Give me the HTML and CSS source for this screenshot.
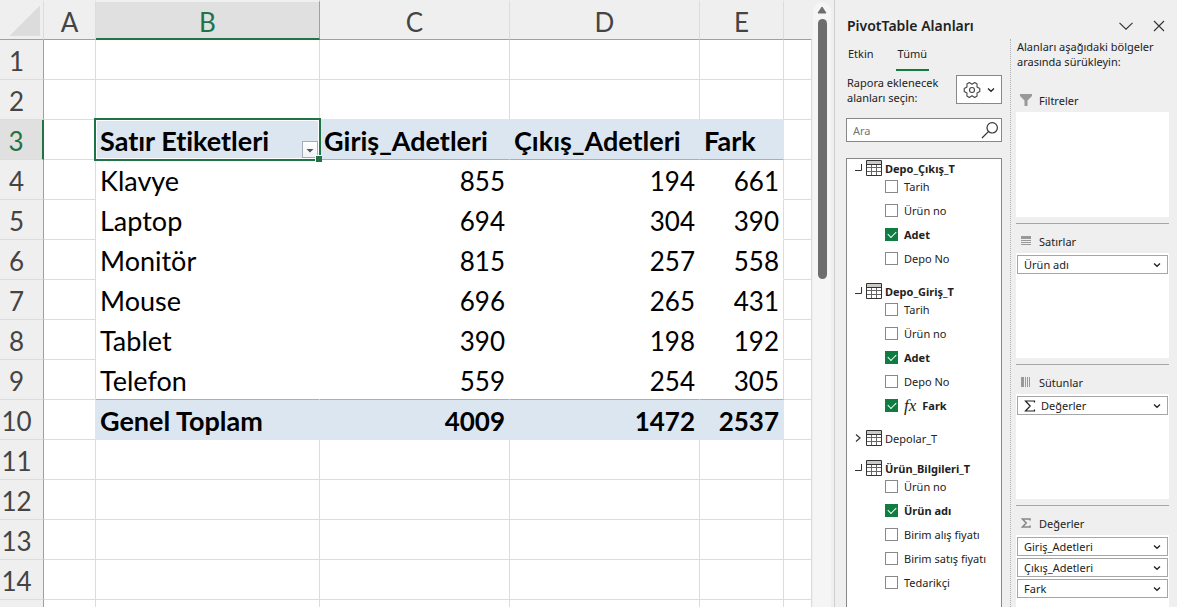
FILE: index.html
```html
<!DOCTYPE html>
<html lang="tr">
<head>
    <meta charset="UTF-8">
    <meta name="viewport" content="width=device-width, initial-scale=1.0">
    <title>PivotTable Alanları</title>
    <link rel="stylesheet" href="styles.css">
</head>
<body>

<!-- Shared icons -->
<svg class="icon-defs" aria-hidden="true">
    <symbol id="chevron" viewBox="0 0 8 8"><path d="M1 2.5 4 5.3 7 2.5" fill="none" stroke="#222" stroke-width="1.3"/></symbol>
    <symbol id="table" viewBox="0 0 16 16">
        <path d="M.5.5h15v15H.5z" fill="#fff"/>
        <path d="M1 1h14v3H1z" fill="#c8cbc5"/>
        <path d="M1 7.5h14M1 11.5h14M5.5 4v11M10.5 4v11" stroke="#666" fill="none"/>
        <path d="M.5.5h15v15H.5zM1 4.5h14" fill="none" stroke="#333"/>
    </symbol>
    <symbol id="open" viewBox="0 0 8 8"><path d="M6.5 0v6.5H0" fill="none" stroke="#333"/></symbol>
    <symbol id="closed" viewBox="0 0 8 8"><path d="M1 .5 5 4 1 7.5" fill="none" stroke="#333" stroke-width="1.2"/></symbol>
    <symbol id="sigma" viewBox="0 0 12 12"><path d="M10.5 2.5V1H1.5l4.7 5-4.7 5h9V9.5" fill="none" stroke="currentColor" stroke-width="1.2"/></symbol>
</svg>

<div class="app">
    <!-- Worksheet -->
    <main class="sheet">
        <table class="grid">
            <colgroup>
                <col class="col-head"><col class="col-a"><col class="col-b"><col class="col-c"><col class="col-d"><col class="col-e"><col>
            </colgroup>
            <thead>
                <tr><th class="corner"></th><th>A</th><th class="active">B</th><th>C</th><th>D</th><th>E</th><th></th></tr>
            </thead>
            <tbody>
                <tr><th>1</th><td></td><td></td><td></td><td></td><td></td><td></td></tr>
                <tr class="above"><th>2</th><td></td><td></td><td></td><td></td><td></td><td></td></tr>
                <tr class="pivot pivot-head">
                    <th class="active">3</th><td></td>
                    <td class="selected">Satır Etiketleri<button class="filter" aria-label="Filtrele"></button></td>
                    <td>Giriş_Adetleri</td><td>Çıkış_Adetleri</td><td>Fark</td><td></td>
                </tr>
                <tr class="pivot"><th>4</th><td></td><td>Klavye</td><td class="num">855</td><td class="num">194</td><td class="num">661</td><td></td></tr>
                <tr class="pivot"><th>5</th><td></td><td>Laptop</td><td class="num">694</td><td class="num">304</td><td class="num">390</td><td></td></tr>
                <tr class="pivot"><th>6</th><td></td><td>Monitör</td><td class="num">815</td><td class="num">257</td><td class="num">558</td><td></td></tr>
                <tr class="pivot"><th>7</th><td></td><td>Mouse</td><td class="num">696</td><td class="num">265</td><td class="num">431</td><td></td></tr>
                <tr class="pivot"><th>8</th><td></td><td>Tablet</td><td class="num">390</td><td class="num">198</td><td class="num">192</td><td></td></tr>
                <tr class="pivot pivot-last"><th>9</th><td></td><td>Telefon</td><td class="num">559</td><td class="num">254</td><td class="num">305</td><td></td></tr>
                <tr class="pivot pivot-total"><th>10</th><td></td><td>Genel Toplam</td><td class="num">4009</td><td class="num">1472</td><td class="num">2537</td><td></td></tr>
                <tr><th>11</th><td></td><td></td><td></td><td></td><td></td><td></td></tr>
                <tr><th>12</th><td></td><td></td><td></td><td></td><td></td><td></td></tr>
                <tr><th>13</th><td></td><td></td><td></td><td></td><td></td><td></td></tr>
                <tr><th>14</th><td></td><td></td><td></td><td></td><td></td><td></td></tr>
                <tr><th></th><td></td><td></td><td></td><td></td><td></td><td></td></tr>
            </tbody>
        </table>
    </main>

    <div class="scrollbar">
        <svg width="10" height="8" viewBox="0 0 10 8"><path d="M5 1 9 7H1z" fill="#6e6e6e" stroke="#6e6e6e" stroke-linejoin="round"/></svg>
        <div class="thumb"></div>
    </div>

    <!-- Field list pane -->
    <aside class="pane">
        <header class="pane-title">
            <h1>PivotTable Alanları</h1>
            <button class="plain" aria-label="Görev bölmesi seçenekleri"><svg width="14" height="8" viewBox="0 0 14 8"><path d="M.5.8 7 7.2 13.5.8" fill="none" stroke="#333" stroke-width="1.1"/></svg></button>
            <button class="plain" aria-label="Kapat"><svg width="12" height="12" viewBox="0 0 12 12"><path d="m1 1 10 10M11 1 1 11" stroke="#333" stroke-width="1.1"/></svg></button>
        </header>

        <div class="pane-body">
            <section class="fields">
                <div class="tabs">
                    <button class="tab">Etkin</button>
                    <button class="tab current">Tümü</button>
                </div>

                <div class="choose">
                    <p>Rapora eklenecek alanları seçin:</p>
                    <button class="tools" aria-label="Araçlar">
                        <svg width="18" height="18" viewBox="0 0 18 18" fill="none" stroke="#444" stroke-width="1.1" stroke-linejoin="round"><path d="M16.8 7.6v2.8l-2.8 1.5.1 3.2-2.4 1.4L9 14.8l-2.7 1.7-2.4-1.4.1-3.2-2.8-1.5V7.6L4 6.1l-.1-3.2 2.4-1.4L9 3.2l2.7-1.7 2.4 1.4-.1 3.2z"/><circle cx="9" cy="9" r="2.5"/></svg>
                        <svg width="8" height="8"><use href="#chevron"/></svg>
                    </button>
                </div>

                <div class="search">
                    <input type="text" placeholder="Ara" aria-label="Ara">
                    <svg width="18" height="18" viewBox="0 0 18 18" fill="none" stroke="#333" stroke-width="1.2"><circle cx="11.2" cy="6.8" r="5.2"/><path d="M7.4 10.6 1 17"/></svg>
                </div>

                <div class="field-list">
                    <div class="group">
                        <h2><svg width="8" height="8"><use href="#open"/></svg><svg width="16" height="16"><use href="#table"/></svg><span>Depo_Çıkış_T</span></h2>
                        <div class="group-fields">
                            <label><input type="checkbox">Tarih</label>
                            <label><input type="checkbox">Ürün no</label>
                            <label class="on"><input type="checkbox" checked>Adet</label>
                            <label><input type="checkbox">Depo No</label>
                        </div>
                    </div>
                    <div class="group">
                        <h2><svg width="8" height="8"><use href="#open"/></svg><svg width="16" height="16"><use href="#table"/></svg><span>Depo_Giriş_T</span></h2>
                        <div class="group-fields">
                            <label><input type="checkbox">Tarih</label>
                            <label><input type="checkbox">Ürün no</label>
                            <label class="on"><input type="checkbox" checked>Adet</label>
                            <label><input type="checkbox">Depo No</label>
                            <label class="on"><input type="checkbox" checked><i class="fx">fx</i>Fark</label>
                        </div>
                    </div>
                    <div class="group collapsed">
                        <h2><svg width="8" height="8"><use href="#closed"/></svg><svg width="16" height="16"><use href="#table"/></svg><span>Depolar_T</span></h2>
                    </div>
                    <div class="group">
                        <h2><svg width="8" height="8"><use href="#open"/></svg><svg width="16" height="16"><use href="#table"/></svg><span>Ürün_Bilgileri_T</span></h2>
                        <div class="group-fields">
                            <label><input type="checkbox">Ürün no</label>
                            <label class="on"><input type="checkbox" checked>Ürün adı</label>
                            <label><input type="checkbox">Birim alış fiyatı</label>
                            <label><input type="checkbox">Birim satış fiyatı</label>
                            <label><input type="checkbox">Tedarikçi</label>
                        </div>
                    </div>
                </div>
            </section>

            <section class="areas">
                <p class="hint">Alanları aşağıdaki bölgeler arasında sürükleyin:</p>
                <div class="area">
                    <h3><svg width="12" height="12" viewBox="0 0 12 12"><path d="M0 0h12v2L7.5 6.5V12h-3V6.5L0 2z" fill="#999"/></svg>Filtreler</h3>
                    <div class="drop"></div>
                </div>
                <div class="area">
                    <h3><svg width="12" height="12" viewBox="0 0 12 12"><path d="M1 1h10v3H1zM1 5h10v1H1zM1 7h10v1H1zM1 9h10v1H1z" fill="#999"/></svg>Satırlar</h3>
                    <div class="drop">
                        <button class="item" aria-haspopup="menu"><span>Ürün adı</span><svg width="8" height="8"><use href="#chevron"/></svg></button>
                    </div>
                </div>
                <div class="area">
                    <h3><svg width="12" height="12" viewBox="0 0 12 12"><path d="M1 1h3v10H1zM5 1h1v10H5zM7 1h1v10H7zM9 1h1v10H9z" fill="#999"/></svg>Sütunlar</h3>
                    <div class="drop">
                        <button class="item" aria-haspopup="menu"><svg width="12" height="12"><use href="#sigma"/></svg><span>Değerler</span><svg width="8" height="8"><use href="#chevron"/></svg></button>
                    </div>
                </div>
                <div class="area">
                    <h3><svg class="muted" width="12" height="12" viewBox="0 0 12 12"><path d="M10 3.5V2H2.5l3.7 4-3.7 4H10V8.5" fill="none" stroke="currentColor" stroke-width="1.6"/></svg>Değerler</h3>
                    <div class="drop">
                        <button class="item" aria-haspopup="menu"><span>Giriş_Adetleri</span><svg width="8" height="8"><use href="#chevron"/></svg></button>
                        <button class="item" aria-haspopup="menu"><span>Çıkış_Adetleri</span><svg width="8" height="8"><use href="#chevron"/></svg></button>
                        <button class="item" aria-haspopup="menu"><span>Fark</span><svg width="8" height="8"><use href="#chevron"/></svg></button>
                    </div>
                </div>
            </section>
        </div>
    </aside>
</div>

</body>
</html>
```
FILE: styles.css
```css
* {
    box-sizing: border-box;
}

body {
    margin: 0;
    font-family: "Noto Sans", "Open Sans", sans-serif;
    font-size: 11px;
    line-height: 15px;
    color: #222;
    background-color: #efefef;
}

h1, h2, h3, p {
    margin: 0;
}

button, input {
    font: inherit;
    color: inherit;
}

button {
    cursor: pointer;
}

svg {
    flex: none;
}

.icon-defs {
    display: none;
}

.app {
    display: flex;
    height: 100vh;
    overflow: hidden;
}

/* Worksheet */
.sheet {
    flex: 1;
    min-width: 0;
    overflow: hidden;
}

.grid {
    width: 100%;
    table-layout: fixed;
    border-collapse: separate;
    border-spacing: 0;
    font-family: Lato, sans-serif;
    font-size: 26px;
    font-variant-ligatures: none;
    line-height: 32px;
    color: #000;
}

.col-head { width: 44px; }
.col-a { width: 52px; }
.col-b { width: 224px; }
.col-c, .col-d { width: 190px; }
.col-e { width: 84px; }

.grid th, .grid td {
    height: 40px;
    padding: 3px 4px 0;
    border-right: 1px solid #dcdcdc;
    border-bottom: 1px solid #dcdcdc;
    white-space: nowrap;
}

.grid th {
    font-weight: 400;
    color: #444;
    background-color: #efefef;
}

.grid td {
    font-size: 27px;
    background-color: #fff;
}

.grid thead th {
    padding: 3px 0 0;
    border-top: 2px solid #efefef;
    border-bottom-color: #a0a0a0;
}

.grid thead th:last-child {
    border-right-color: #efefef;
}

.grid thead .active {
    color: #217346;
    background-color: #e0e0e0;
    border-right-color: #a0a0a0;
    border-bottom: 2px solid #217346;
}

.grid tbody th {
    padding: 3px 10px 0 0;
    border-right-color: #a0a0a0;
}

.grid tbody .active {
    color: #217346;
    background-color: #e0e0e0;
    border-right: 2px solid #217346;
}

.grid .corner {
    background: linear-gradient(135deg, transparent 50%, #dcdcdc 50%) 10px 4px / 30px 30px no-repeat #efefef;
}

.grid .num {
    font-size: 26px;
    text-align: right;
}

.pivot td:nth-child(n+3):nth-child(-n+5) {
    border-right-color: transparent;
}

.pivot td:nth-child(n+3):nth-child(-n+6) {
    border-bottom-color: transparent;
}

.above td:nth-child(n+3):nth-child(-n+6) {
    border-bottom-color: #dce6f1;
}

.pivot-head td:nth-child(n+3):nth-child(-n+6),
.pivot-total td:nth-child(n+3):nth-child(-n+6) {
    font-weight: 700;
    background-color: #dce6f1;
    border-right-color: #dce6f1;
    border-bottom-color: #dce6f1;
}

.pivot-total td:nth-child(2) {
    border-right-color: #dce6f1;
}

.pivot-head td:nth-child(n+3):nth-child(-n+6),
.pivot-last td:nth-child(n+3):nth-child(-n+6) {
    border-bottom-color: #95b3d7;
}

.selected {
    position: relative;
}

.selected::before {
    content: "";
    position: absolute;
    inset: -2px;
    border: 2px solid #217346;
    box-shadow: inset 0 0 0 1px #fff;
}

.selected::after {
    content: "";
    position: absolute;
    right: -3px;
    bottom: -3px;
    width: 6px;
    height: 6px;
    background-color: #217346;
    border-top: 1px solid #fff;
    border-left: 1px solid #fff;
}

.filter {
    position: absolute;
    right: 1px;
    bottom: 1px;
    width: 16px;
    height: 17px;
    padding: 0;
    background: linear-gradient(#fff, #f0f2f6);
    border: 1px solid #a6abb5;
}

.filter::after {
    content: "";
    display: block;
    width: 8px;
    height: 4px;
    margin: 2px auto 0;
    background-color: #555;
    clip-path: polygon(0 0, 100% 0, 50% 100%);
}

.scrollbar {
    display: flex;
    flex-direction: column;
    align-items: center;
    gap: 5px;
    width: 18px;
    margin: 2px 3px 0 1px;
    padding-top: 4px;
    background-color: #f5f5f5;
    border-radius: 9px 9px 0 0;
}

.thumb {
    width: 9px;
    height: 260px;
    background-color: #6e6e6e;
    border-radius: 5px;
}

/* Field list pane */
.pane {
    display: flex;
    flex-direction: column;
    width: 343px;
    padding-right: 8px;
    border-left: 1px solid #d0d0d0;
}

.pane-title {
    display: flex;
    align-items: center;
    gap: 20px;
    padding: 15px 4px 2px 12px;
}

.pane-title h1 {
    flex: 1;
    font-size: 14px;
    font-weight: 600;
    line-height: 22px;
}

.plain {
    display: flex;
    padding: 0;
    background: none;
    border: none;
}

.pane-body {
    display: flex;
    flex: 1;
    min-height: 0;
}

.fields {
    display: flex;
    flex-direction: column;
    width: 176px;
    padding: 7px 8px 0 11px;
    border-right: 1px dotted #b0b0b0;
}

.tabs {
    display: flex;
    gap: 20px;
}

.tab {
    padding: 0 2px 8px;
    background: none;
    border: none;
    border-bottom: 2px solid transparent;
}

.tab.current {
    border-color: #107c41;
}

.choose {
    display: flex;
    justify-content: space-between;
    padding: 4px 0 13px 1px;
}

.tools {
    display: flex;
    flex: none;
    align-items: center;
    justify-content: center;
    gap: 6px;
    width: 46px;
    height: 29px;
    padding: 0;
    background-color: #fff;
    border: 1px solid #888;
}

.search {
    display: flex;
    align-items: center;
    height: 24px;
    padding: 0 2px 0 6px;
    background-color: #fff;
    border: 1px solid #888;
}

.search input {
    flex: 1;
    min-width: 0;
    padding: 0;
    background: none;
    border: none;
    outline: none;
}

.search input::placeholder {
    color: #767676;
}

.field-list {
    display: flex;
    flex: 1;
    flex-direction: column;
    gap: 12px;
    min-height: 0;
    margin-top: 16px;
    padding-left: 8px;
    overflow: hidden;
    background-color: #fff;
    border: 1px solid #888;
    border-bottom: none;
}

.group {
    flex: none;
}

.group h2 {
    display: flex;
    align-items: center;
    gap: 3px;
    height: 18px;
    font-size: 11px;
    font-weight: 700;
}

.group.collapsed h2 {
    font-weight: 400;
}

.group-fields {
    display: flex;
    flex-direction: column;
    gap: 6px;
    padding: 0 0 3px 30px;
}

.group-fields label {
    display: flex;
    align-items: center;
    gap: 6px;
    height: 18px;
    white-space: nowrap;
}

.group-fields .on {
    font-weight: 700;
}

.group-fields input {
    position: relative;
    flex: none;
    width: 13px;
    height: 13px;
    margin: 0;
    appearance: none;
    background-color: #fff;
    border: 1px solid #888;
}

.group-fields input:checked {
    background-color: #107c41;
    border-color: #107c41;
}

.group-fields input:checked::after {
    content: "";
    position: absolute;
    top: 2px;
    left: 2px;
    width: 7px;
    height: 4px;
    border-left: 1px solid #fff;
    border-bottom: 1px solid #fff;
    transform: rotate(-45deg);
}

.fx {
    font-family: "Liberation Serif", serif;
    font-size: 17px;
    font-weight: 400;
}

/* Drop areas */
.areas {
    flex: 1;
    min-width: 0;
    padding-left: 5px;
}

.hint {
    padding: 0 1px 14px;
}

.area {
    padding-bottom: 6px;
}

.area + .area {
    border-top: 1px solid #a6a6a6;
}

.area h3 {
    display: flex;
    align-items: center;
    gap: 7px;
    height: 29px;
    padding: 5px 0 0 4px;
    font-size: 11px;
    font-weight: 400;
}

.muted {
    color: #888;
}

.drop {
    display: flex;
    flex-direction: column;
    gap: 2px;
    height: 105px;
    padding: 2px 1px;
    background-color: #fff;
}

.item {
    display: flex;
    align-items: center;
    gap: 5px;
    height: 19px;
    padding: 0 6px;
    text-align: left;
    background-color: #fff;
    border: 1px solid #a6a6a6;
}

.item span {
    flex: 1;
}
```
